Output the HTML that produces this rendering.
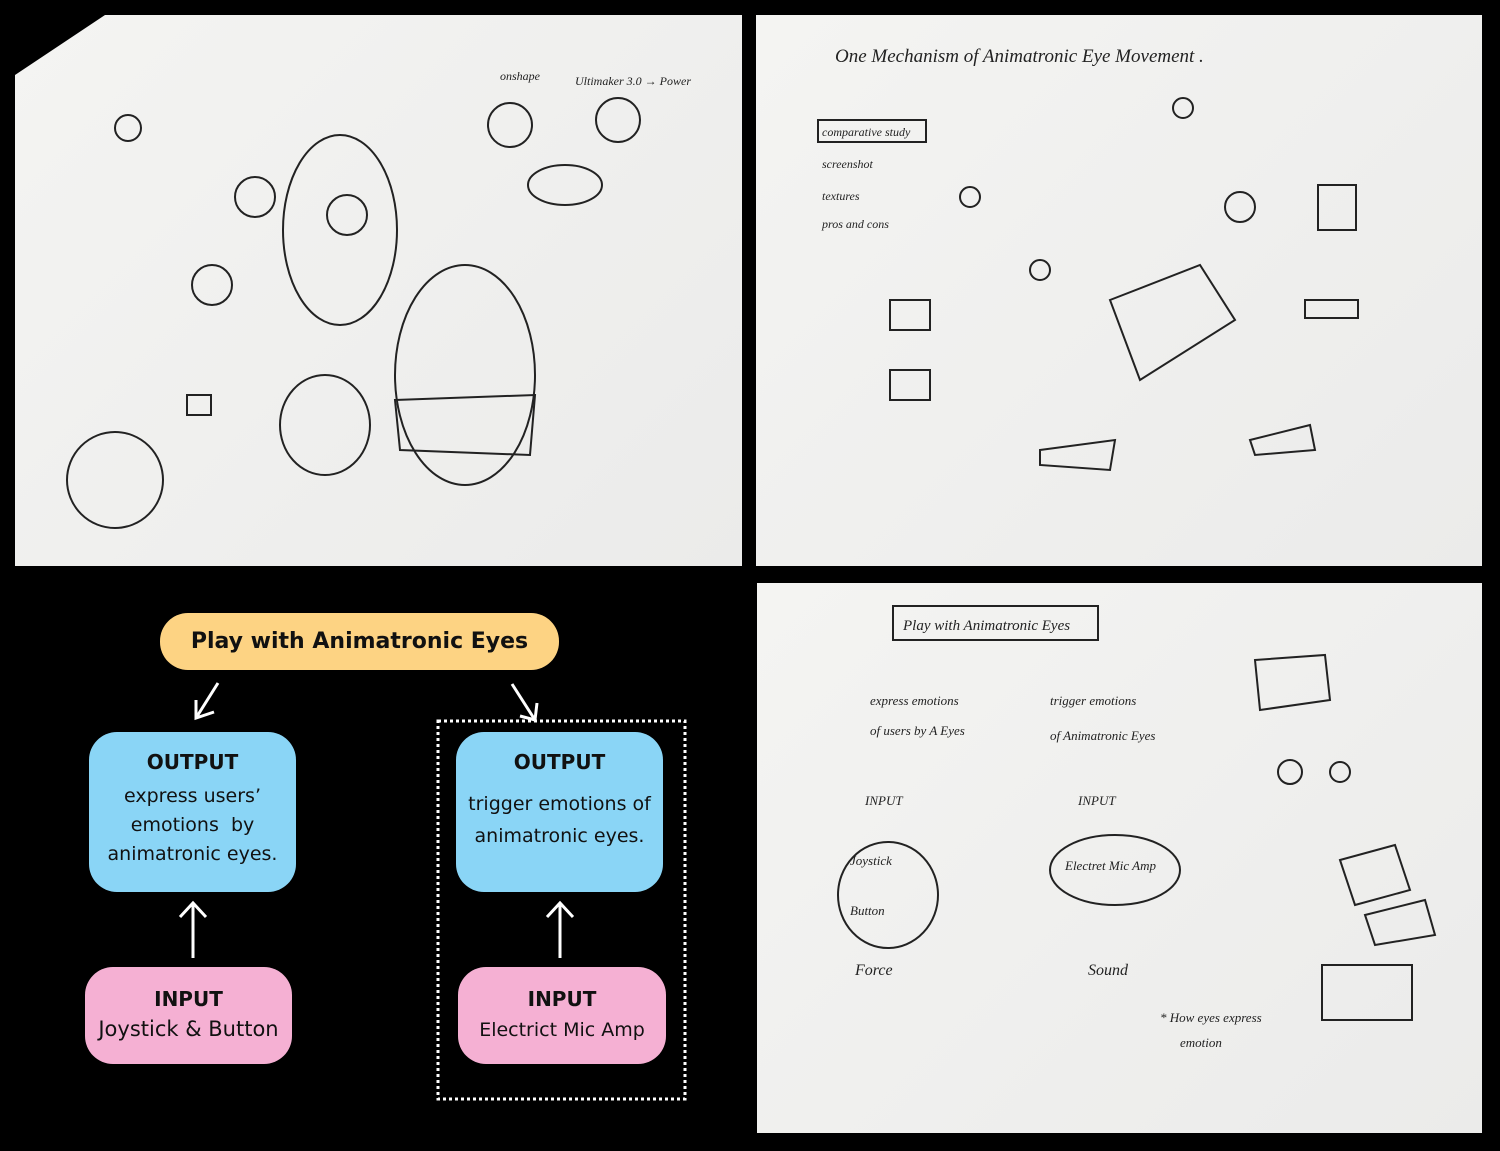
<!DOCTYPE html>
<html><head><meta charset="utf-8"><style>
body{margin:0;width:1500px;height:1151px;background:#000;position:relative;overflow:hidden;font-family:"Liberation Sans",sans-serif}
.p{position:absolute;background:linear-gradient(135deg,#f4f4f2,#ebebea)}
.b{position:absolute;box-sizing:border-box;text-align:center;color:#111;font-family:"DejaVu Sans","Liberation Sans",sans-serif}
.o{background:#8ad5f6;border-radius:28px}
.i{background:#f5b0d3;border-radius:28px}
.h{font-weight:bold;font-size:20px}
.t{font-size:19px;line-height:30px}
svg{position:absolute;left:0;top:0}
.hw{font-family:"Liberation Serif",serif;font-style:italic;fill:#222}
</style></head><body>
<div class="p" style="left:15px;top:15px;width:727px;height:551px"></div>
<div class="p" style="left:756px;top:15px;width:726px;height:551px"></div>
<div class="p" style="left:757px;top:583px;width:725px;height:550px"></div>
<svg width="1500" height="1151" fill="none" stroke="#222" stroke-width="2">
<polygon points="15,15 105,15 15,75" fill="#000" stroke="none"/>
<ellipse cx="340" cy="230" rx="57" ry="95"/><ellipse cx="465" cy="375" rx="70" ry="110"/><ellipse cx="325" cy="425" rx="45" ry="50"/><circle cx="115" cy="480" r="48"/><circle cx="255" cy="197" r="20"/><circle cx="212" cy="285" r="20"/><ellipse cx="565" cy="185" rx="37" ry="20"/><circle cx="510" cy="125" r="22"/><circle cx="618" cy="120" r="22"/><circle cx="128" cy="128" r="13"/><circle cx="347" cy="215" r="20"/>
<path d="M395 400 L535 395 L530 455 L400 450Z"/><rect x="187" y="395" width="24" height="20"/>
<text x="500" y="80" class="hw" font-size="12" stroke="none">onshape</text><text x="575" y="85" class="hw" font-size="12" stroke="none">Ultimaker 3.0 → Power</text>
<text x="835" y="62" class="hw" font-size="19" stroke="none">One Mechanism of Animatronic Eye Movement .</text>
<rect x="818" y="120" width="108" height="22"/><text x="822" y="136" class="hw" font-size="12" stroke="none">comparative study</text>
<text x="822" y="168" class="hw" font-size="12" stroke="none">screenshot</text><text x="822" y="200" class="hw" font-size="12" stroke="none">textures</text><text x="822" y="228" class="hw" font-size="12" stroke="none">pros and cons</text>
<path d="M1110 300 L1200 265 L1235 320 L1140 380Z"/><path d="M1040 450 L1115 440 L1110 470 L1040 465Z"/><circle cx="1040" cy="270" r="10"/><circle cx="970" cy="197" r="10"/><circle cx="1240" cy="207" r="15"/><circle cx="1183" cy="108" r="10"/><rect x="1318" y="185" width="38" height="45"/><path d="M1305 300 H1358 V318 H1305Z"/><path d="M1250 440 L1310 425 L1315 450 L1255 455Z"/>
<path d="M890 300 h40 v30 h-40z M890 370 h40 v30 h-40z"/>
<rect x="893" y="606" width="205" height="34"/><text x="903" y="630" class="hw" font-size="15" stroke="none">Play with Animatronic Eyes</text>
<text x="870" y="705" class="hw" font-size="13" stroke="none">express emotions</text><text x="870" y="735" class="hw" font-size="13" stroke="none">of users by A Eyes</text>
<text x="1050" y="705" class="hw" font-size="13" stroke="none">trigger emotions</text><text x="1050" y="740" class="hw" font-size="13" stroke="none">of Animatronic Eyes</text>
<text x="865" y="805" class="hw" font-size="13" stroke="none">INPUT</text><text x="1078" y="805" class="hw" font-size="13" stroke="none">INPUT</text>
<ellipse cx="888" cy="895" rx="50" ry="53"/><ellipse cx="1115" cy="870" rx="65" ry="35"/>
<text x="850" y="865" class="hw" font-size="13" stroke="none">Joystick</text><text x="850" y="915" class="hw" font-size="13" stroke="none">Button</text><text x="1065" y="870" class="hw" font-size="13" stroke="none">Electret Mic Amp</text>
<text x="855" y="975" class="hw" font-size="16" stroke="none">Force</text><text x="1088" y="975" class="hw" font-size="16" stroke="none">Sound</text>
<text x="1160" y="1022" class="hw" font-size="13" stroke="none">* How eyes express</text><text x="1180" y="1047" class="hw" font-size="13" stroke="none">emotion</text>
<path d="M1255 660 L1325 655 L1330 700 L1260 710Z"/><path d="M1340 860 L1395 845 L1410 890 L1355 905Z"/><path d="M1365 915 L1425 900 L1435 935 L1375 945Z"/><rect x="1322" y="965" width="90" height="55"/><circle cx="1290" cy="772" r="12"/><circle cx="1340" cy="772" r="10"/>
</svg>
<div class="b" style="left:160px;top:613px;width:399px;height:57px;background:#fdd383;border-radius:28px;font-weight:bold;font-size:22px;line-height:57px">Play with Animatronic Eyes</div>
<svg width="1500" height="1151" fill="none" stroke="#fff" stroke-width="3">
<path d="M218 683 L196 718 M196 700 L196 718 L214 712"/><path d="M512 684 L535 720 M520 716 L535 720 L537 703"/>
<path d="M193 958 V903 M180 917 L193 903 L206 917"/><path d="M560 958 V903 M547 917 L560 903 L573 917"/>
<rect x="438" y="721" width="247" height="378" stroke-dasharray="3 3" stroke-width="3"/>
</svg>
<div class="b o" style="left:89px;top:732px;width:207px;height:160px;padding-top:18px"><div class="h">OUTPUT</div><div class="t" style="margin-top:8px;line-height:29px">express users’<br>emotions &nbsp;by<br>animatronic eyes.</div></div>
<div class="b o" style="left:456px;top:732px;width:207px;height:160px;padding-top:18px"><div class="h">OUTPUT</div><div class="t" style="margin-top:14px;line-height:32px">trigger emotions of<br>animatronic eyes.</div></div>
<div class="b i" style="left:85px;top:967px;width:207px;height:97px;padding-top:20px"><div class="h">INPUT</div><div style="font-size:21px;margin-top:6px">Joystick &amp; Button</div></div>
<div class="b i" style="left:458px;top:967px;width:208px;height:97px;padding-top:20px"><div class="h">INPUT</div><div style="font-size:19px;margin-top:8px">Electrict Mic Amp</div></div>
</body></html>
